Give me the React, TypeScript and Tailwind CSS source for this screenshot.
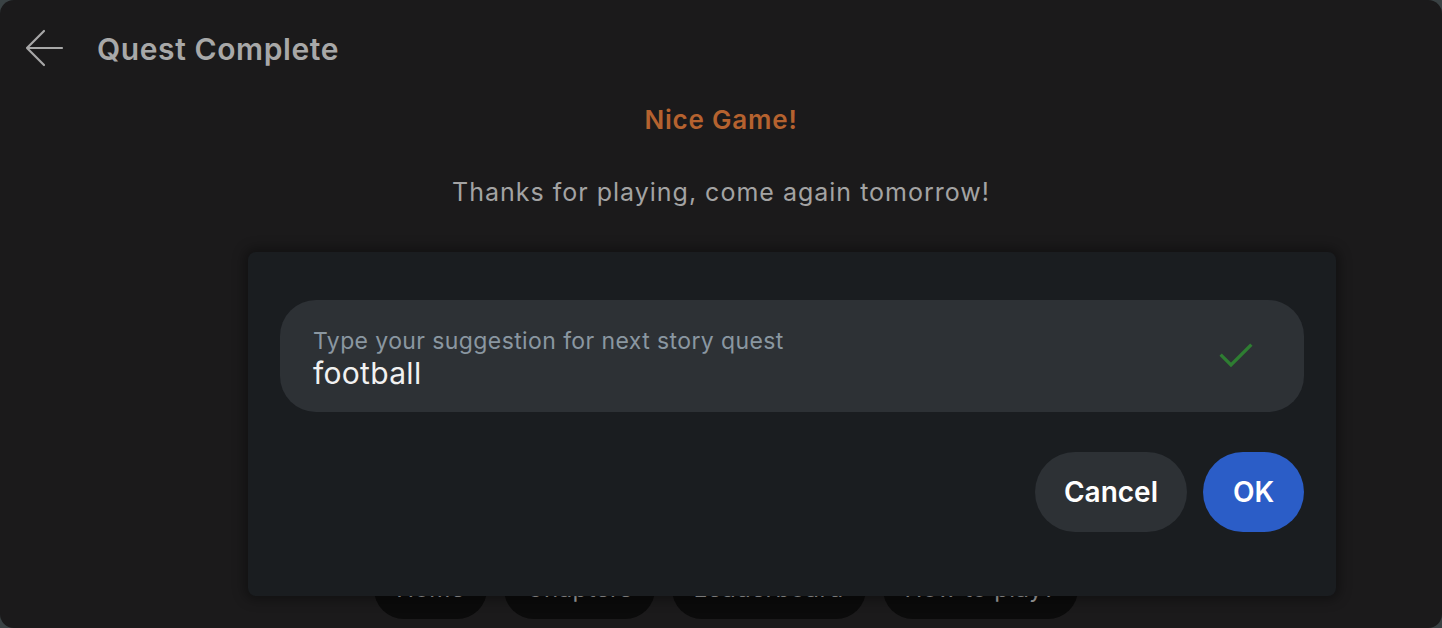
import React from 'react';

const navItems = ['Home', 'Chapters', 'Leaderboard', 'How to play?'];

export default function App() {
  return (
    <div className="w-[1442px] h-[628px] bg-[#3a4244] overflow-hidden">
      <div
        className="relative w-full h-full bg-[#1b1a1b] rounded-[14px] overflow-hidden flex flex-col"
        style={{ fontFamily: 'Inter, "Noto Sans", sans-serif' }}
      >
        {/* Header */}
        <div className="h-[98px] flex items-center pl-[24px] shrink-0">
          <svg width="40" height="40" viewBox="0 0 40 40" fill="none" className="text-[#a8a8a8]">
            <path d="M38 19H3M20 2L3 19L20 36" stroke="currentColor" strokeWidth="2.2" strokeLinecap="round" strokeLinejoin="round" />
          </svg>
          <h1 className="ml-[33px] text-[30px] font-semibold text-[#a8a8a8] tracking-[0.6px]">Quest Complete</h1>
        </div>

        {/* Body */}
        <div className="flex flex-col items-center">
          <h2 className="text-[26px] leading-[44px] font-semibold text-[#b5622f] tracking-[0.8px]">Nice Game!</h2>
          <p className="mt-[34px] text-[25px] leading-[32px] text-[#a3a3a3] tracking-[1px]">
            Thanks for playing, come again tomorrow!
          </p>
        </div>

        {/* Bottom nav, mostly hidden behind the dialog */}
        <div className="mt-[351px] flex justify-center gap-[17px] pl-[10px]">
          {navItems.map((item) => (
            <button
              key={item}
              className="h-[60px] px-[22px] rounded-full bg-[#0b0b0b] text-[24px] text-[#a3a3a3] tracking-[0.4px] whitespace-nowrap"
            >
              {item}
            </button>
          ))}
        </div>

        {/* Dialog */}
        <div className="absolute left-[248px] top-[252px] w-[1088px] h-[344px] rounded-[8px] bg-[#1a1d20] shadow-[0_0_12px_4px_rgba(0,0,0,0.35)] px-[32px] pt-[48px]">
          <div className="h-[112px] rounded-[36px] bg-[#2d3135] flex items-center pl-[33px] pr-[48px]">
            <div className="flex-1 flex flex-col mt-[6px]">
              <span className="text-[23px] leading-[28px] text-[#8a97a1] tracking-[0.4px]">
                Type your suggestion for next story quest
              </span>
              <span className="text-[30px] leading-[36px] text-[#f1f1f1] tracking-[0.3px]">football</span>
            </div>
            <svg width="40" height="40" viewBox="0 0 24 24" fill="none" className="text-[#2e7d32] mt-[-2px]">
              <path d="M3.5 12.5L9 18L20.5 6.5" stroke="currentColor" strokeWidth="2" strokeLinecap="square" />
            </svg>
          </div>
          <div className="mt-[40px] flex justify-end gap-[16px]">
            <button className="h-[80px] w-[152px] rounded-full bg-[#2d3135] text-[28px] font-semibold text-white">
              Cancel
            </button>
            <button className="h-[80px] w-[101px] rounded-full bg-[#2b5dc7] text-[28px] font-semibold text-white">
              OK
            </button>
          </div>
        </div>
      </div>
    </div>
  );
}
